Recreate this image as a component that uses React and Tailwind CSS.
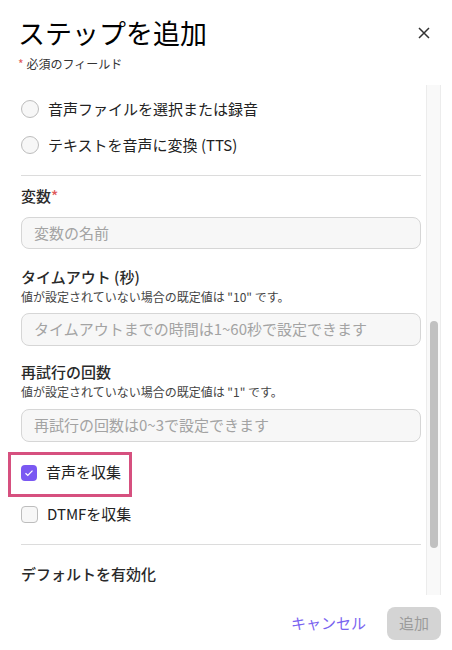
import React from 'react';

const font = { fontFamily: '"Noto Sans CJK JP", "Noto Sans", sans-serif' };

const Radio = ({ label }) => (
  <div className="flex items-center h-9 gap-[9px]">
    <span className="w-[18px] h-[18px] rounded-full border border-[#bdbdbd] bg-[#f7f7f7]" />
    <span className="text-[15px] text-[#222]">{label}</span>
  </div>
);

const Input = ({ placeholder, className = '' }) => (
  <div
    className={`h-8 rounded-lg border border-[#d6d6d6] bg-[#f7f7f7] flex items-center px-3 text-[15px] text-[#a3a3a3] ${className}`}
  >
    {placeholder}
  </div>
);

const Label = ({ children, className = '' }) => (
  <div className={`text-[15px] leading-[22px] font-medium text-[#2a2a2a] ${className}`}>
    {children}
  </div>
);

const Help = ({ children }) => (
  <div className="text-[12px] leading-[18px] text-[#444]">{children}</div>
);

export default function App() {
  return (
    <div className="w-[452px] h-[650px] bg-white flex flex-col relative" style={font}>
      {/* header */}
      <div className="flex items-start justify-between pl-[18px] pr-[22px] pt-[14px] h-[85px]">
        <div>
          <h1 className="text-[27px] leading-[38px] text-black font-normal">ステップを追加</h1>
          <p className="text-[12px] leading-[18px] text-[#333] mt-[3px]">
            <span className="text-[#e05a5a] mr-[3px]">*</span>必須のフィールド
          </p>
        </div>
        <button className="mt-[13px] text-[#333]">
          <svg width="12" height="12" viewBox="0 0 12 12" fill="none" stroke="currentColor" strokeWidth="1.5">
            <path d="M1 1l10 10M11 1L1 11" />
          </svg>
        </button>
      </div>

      {/* body */}
      <div className="flex h-[510px]">
        <div className="flex-1 overflow-hidden pl-[21px] pr-[5px] pt-[6px]">
          <Radio label="音声ファイルを選択または録音" />
          <Radio label="テキストを音声に変換 (TTS)" />
          <div className="h-px bg-[#dcdcdc] mt-3" />

          <Label className="mt-[9px]">
            変数<span className="text-[#e05a5a]">*</span>
          </Label>
          <Input placeholder="変数の名前" className="mt-[10px]" />

          <Label className="mt-[17px]">タイムアウト (秒)</Label>
          <Help>値が設定されていない場合の既定値は "10" です。</Help>
          <Input placeholder="タイムアウトまでの時間は1~60秒で設定できます" className="mt-[7px] h-[33px]" />

          <Label className="mt-[15px]">再試行の回数</Label>
          <Help>値が設定されていない場合の既定値は "1" です。</Help>
          <Input placeholder="再試行の回数は0~3で設定できます" className="mt-[8px] h-[33px]" />

          <div className="mt-[12px] flex items-center h-[37px] gap-[9px]">
            <span className="w-4 h-4 rounded-[4px] bg-[#7a58f2] flex items-center justify-center">
              <svg width="10" height="10" viewBox="0 0 10 10" fill="none" stroke="white" strokeWidth="1.3">
                <path d="M1.5 5.2l2.3 2.2L8.5 2.6" />
              </svg>
            </span>
            <span className="text-[15px] text-[#222]">音声を収集</span>
          </div>
          <div className="mt-[5px] flex items-center h-[37px] gap-[9px]">
            <span className="w-[17px] h-[17px] rounded-[4px] border border-[#bdbdbd] bg-[#f7f7f7]" />
            <span className="text-[15px] text-[#222]">DTMFを収集</span>
          </div>
          <div className="h-px bg-[#dcdcdc] mt-[11px]" />
          <Label className="mt-[18px]">デフォルトを有効化</Label>
        </div>

        {/* scrollbar */}
        <div className="w-[15px] mr-[11px] bg-[#f9f9f9] border-x border-[#ececec] pt-[236px] flex justify-center">
          <div className="w-[8px] h-[227px] rounded-full bg-[#c1c1c1]" />
        </div>
      </div>

      {/* footer */}
      <div className="flex items-center justify-end gap-[21px] pr-[11px] pt-[12px]">
        <button className="text-[15px] text-[#7a64f0]">キャンセル</button>
        <button className="w-[54px] h-[33px] rounded-lg bg-[#d4d4d4] text-[15px] text-[#9b9b9b]">追加</button>
      </div>

      {/* highlight annotation */}
      <div className="absolute left-[8px] top-[452px] w-[124px] h-[45px] border-[3px] border-[#d6507f]" />
    </div>
  );
}
